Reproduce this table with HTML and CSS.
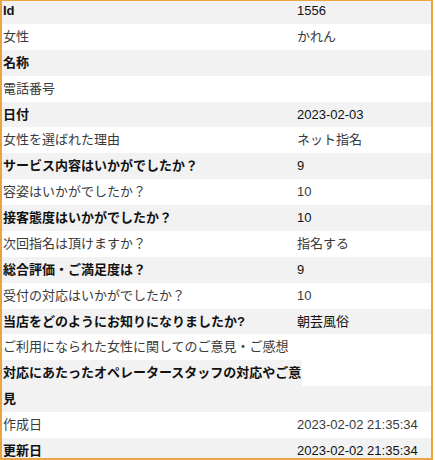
FILE: index.html
```html
<!DOCTYPE html>
<html lang="ja">
<head>
<meta charset="utf-8">
<title>詳細</title>
<link rel="stylesheet" href="styles.css">
</head>
<body>
<div class="frame">
  <div class="list">
    <div class="row odd"><div class="label">Id</div><div class="value">1556</div></div>
    <div class="row"><div class="label">女性</div><div class="value">かれん</div></div>
    <div class="row odd"><div class="label">名称</div><div class="value"></div></div>
    <div class="row"><div class="label">電話番号</div><div class="value"></div></div>
    <div class="row odd"><div class="label">日付</div><div class="value">2023-02-03</div></div>
    <div class="row"><div class="label">女性を選ばれた理由</div><div class="value">ネット指名</div></div>
    <div class="row odd"><div class="label">サービス内容はいかがでしたか？</div><div class="value">9</div></div>
    <div class="row"><div class="label">容姿はいかがでしたか？</div><div class="value">10</div></div>
    <div class="row odd"><div class="label">接客態度はいかがでしたか？</div><div class="value">10</div></div>
    <div class="row"><div class="label">次回指名は頂けますか？</div><div class="value">指名する</div></div>
    <div class="row odd"><div class="label">総合評価・ご満足度は？</div><div class="value">9</div></div>
    <div class="row"><div class="label">受付の対応はいかがでしたか？</div><div class="value">10</div></div>
    <div class="row odd"><div class="label">当店をどのようにお知りになりましたか?</div><div class="value">朝芸風俗</div></div>
    <div class="row"><div class="label">ご利用になられた女性に関してのご意見・ご感想</div><div class="value"></div></div>
    <div class="row odd wide"><div class="label">対応にあたったオペレータースタッフの対応やご意見</div></div>
    <div class="row"><div class="label">作成日</div><div class="value">2023-02-02 21:35:34</div></div>
    <div class="row odd"><div class="label">更新日</div><div class="value">2023-02-02 21:35:34</div></div>
  </div>
</div>
</body>
</html>
```

FILE: styles.css
```css
html, body {
  margin: 0;
  padding: 0;
  background: #ffffff;
}

.frame {
  width: 433px;
  height: 460px;
  box-sizing: border-box;
  border-style: solid;
  border-color: #eaa444;
  border-width: 1px 2px 2px 2px;
  overflow: hidden;
  background: #ffffff;
}

.list {
  margin-top: -3px;
  font-family: "Liberation Sans", "Noto Sans CJK JP", sans-serif;
  font-size: 13px;
  line-height: 25.875px;
}

.row {
  display: grid;
  grid-template-columns: 295px 1fr;
  background: #ffffff;
  color: #3a3a3a;
}

.row.odd {
  background: #f2f2f2;
  color: #111111;
}

.row.odd .label {
  font-weight: bold;
}

.label {
  padding-left: 1px;
  white-space: nowrap;
}

.value {
  white-space: nowrap;
}

.row.wide .label {
  grid-column: 1 / -1;
  width: 303px;
  white-space: normal;
}

.row.wide {
  background:
    linear-gradient(#ffffff, #ffffff) no-repeat right top / calc(100% - 300px) 25.875px,
    #f2f2f2;
}
```
